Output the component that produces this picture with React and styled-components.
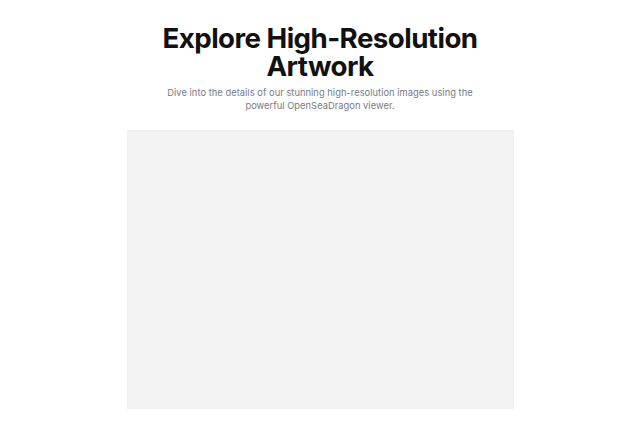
import React from "react";
import styled, { createGlobalStyle } from "styled-components";

const Global = createGlobalStyle`
  html, body { margin: 0; padding: 0; background: #ffffff; }
  body { font-family: Inter, "Noto Sans", sans-serif; }
`;

const Page = styled.main`
  display: flex;
  flex-direction: column;
  align-items: center;
  padding: 24px 16px 0;
`;

const Title = styled.h1`
  margin: 0;
  font-family: Inter, sans-serif;
  font-weight: 700;
  font-size: 27.7px;
  line-height: 28px;
  letter-spacing: -0.02em;
  color: #111111;
  text-align: center;
  max-width: 340px;
`;

const Lead = styled.p`
  margin: 6px 0 0;
  font-family: Inter, sans-serif;
  font-size: 9.3px;
  line-height: 13px;
  letter-spacing: 0.005em;
  color: #767b82;
  text-align: center;
  max-width: 310px;
`;

const Viewer = styled.div`
  margin-top: 18px;
  width: 387px;
  height: 279px;
  background: #f3f3f3;
  border: 1px solid #f0f0f0;
  box-sizing: border-box;
`;

export default function App() {
  return (
    <>
      <Global />
      <Page>
        <Title>Explore High-Resolution Artwork</Title>
        <Lead>
          Dive into the details of our stunning high-resolution images using the powerful
          OpenSeaDragon viewer.
        </Lead>
        <Viewer />
      </Page>
    </>
  );
}
